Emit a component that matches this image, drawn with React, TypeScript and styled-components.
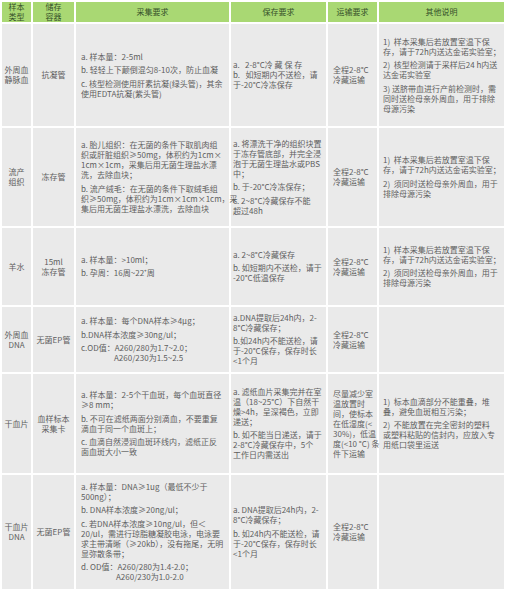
import * as React from "react"
import styled, { createGlobalStyle } from "styled-components"

const GlobalStyle = createGlobalStyle`
  html, body {
    margin: 0;
    padding: 0;
    background: #fff;
  }
  body {
    font-family: "Noto Sans CJK SC", "Noto Sans", sans-serif;
  }
`

const Table = styled.table`
  width: 504px;
  table-layout: fixed;
  border-collapse: collapse;
  font-size: 8px;
  line-height: 10px;
  color: #5e5e5e;
`

const HeadCell = styled.th`
  background: #a9d873;
  color: #35502a;
  font-weight: normal;
  text-align: center;
  vertical-align: middle;
  border: 2px solid #fff;
  padding: 0 2px;
  height: 20px;
`

const Row = styled.tr<{ $h: number }>`
  height: ${p => p.$h}px;
`

const Cell = styled.td<{ $center?: boolean; $pad?: number }>`
  background: #eaeaea;
  border: 2px solid #fff;
  vertical-align: middle;
  text-align: ${p => (p.$center ? "center" : "left")};
  padding: 0 ${p => p.$pad ?? 4}px;
`

const Para = styled.div`
  & + & {
    margin-top: 3.5px;
  }
`

const Line = styled.span<{ $indent?: number }>`
  display: block;
  white-space: pre;
  padding-left: ${p => p.$indent ?? 0}px;
`

type Text = (string | [string, number])[][]

function Lines({ text }: { text: Text }) {
  return (
    <>
      {text.map((para, i) => (
        <Para key={i}>
          {para.map((l, j) =>
            typeof l === "string" ? (
              <Line key={j}>{l}</Line>
            ) : (
              <Line key={j} $indent={l[1]}>
                {l[0]}
              </Line>
            ),
          )}
        </Para>
      ))}
    </>
  )
}

const transport: Text = [["全程2-8°C", "冷藏运输"]]
const noteMother: Text = [
  ["1)  样本采集后若放置室温下保", "存，请于72h内送达金诺实验室；"],
  ["2)  须同时送检母亲外周血，用于", "排除母源污染"],
]

type RowData = {
  h: number
  type: string[]
  tube: string[]
  collect: Text
  keep: Text
  ship: Text
  note: Text
}

const rows: RowData[] = [
  {
    h: 104,
    type: ["外周血", "静脉血"],
    tube: ["抗凝管"],
    collect: [
      ["a. 样本量：2-5ml"],
      ["b. 轻轻上下颠倒混匀8-10次，防止血凝"],
      ["c. 核型检测使用肝素抗凝(绿头管)，其余", "使用EDTA抗凝(紫头管)"],
    ],
    keep: [["a.   2-8°C冷 藏 保 存", "b.   如短期内不送检，请", "于-20°C冷冻保存"]],
    ship: transport,
    note: [
      ["1)  样本采集后若放置室温下保", "存，请于72h内送达金诺实验室；"],
      ["2)  核型检测请于采样后24 h内送", "达金诺实验室"],
      ["3) 送脐带血进行产前检测时，需", "同时送检母亲外周血，用于排除", "母源污染"],
    ],
  },
  {
    h: 100,
    type: ["流产", "组织"],
    tube: ["冻存管"],
    collect: [
      [
        "a. 胎儿组织：在无菌的条件下取肌肉组",
        "织或肝脏组织≥50mg，体积约为1cm×",
        "1cm×1cm，采集后用无菌生理盐水漂",
        "洗，去除血块；",
      ],
      [
        "b. 流产绒毛：在无菌的条件下取绒毛组",
        "织≥50mg，体积约为1cm×1cm×1cm，采",
        "集后用无菌生理盐水漂洗，去除血块",
      ],
    ],
    keep: [
      ["a. 将漂洗干净的组织块置", "于冻存管底部，并完全浸", "泡于无菌生理盐水或PBS", "中；"],
      ["b. 于-20°C冷冻保存；"],
      ["c. 2~8°C冷藏保存不能", "超过48h"],
    ],
    ship: transport,
    note: noteMother,
  },
  {
    h: 79,
    type: ["羊水"],
    tube: ["15ml", "冻存管"],
    collect: [["a. 样本量：>10ml；"], ["b. 孕周：16周~22⁺周"]],
    keep: [["a. 2~8°C冷藏保存"], ["b. 如短期内不送检，请于", "-20°C低温保存"]],
    ship: transport,
    note: noteMother,
  },
  {
    h: 67,
    type: ["外周血", "DNA"],
    tube: ["无菌EP管"],
    collect: [
      ["a. 样本量：每个DNA样本≥4μg；"],
      ["b.DNA样本浓度≥30ng/ul；"],
      ["c.OD值：A260/280为1.7~2.0；", ["A260/230为1.5~2.5", 33]],
    ],
    keep: [["a.DNA提取后24h内，2-", "8°C冷藏保存；"], ["b.如24h内不能送检，请", "于-20°C保存，保存时长", "<1个月"]],
    ship: transport,
    note: [],
  },
  {
    h: 101,
    type: ["干血片"],
    tube: ["血样标本", "采集卡"],
    collect: [
      ["a. 样本量：2-5个干血斑，每个血斑直径", "≥8 mm；"],
      ["b. 不可在滤纸两面分别滴血，不要重复", "滴血于同一个血斑上；"],
      ["c. 血滴自然浸润血斑环线内，滤纸正反", "面血斑大小一致"],
    ],
    keep: [
      ["a. 滤纸血片采集完并在室", "温（18~25°C）下自然干", "燥>4h，呈深褐色，立即", "递送；"],
      ["b. 如不能当日递送，请于", "2-8°C冷藏保存中，5个", "工作日内需送出"],
    ],
    ship: [["尽量减少室", "温放置时", "间，使标本", "在低湿度(<", "30%)，低温", "度(<10 °C) 条", "件下运输"]],
    note: [
      ["1)  标本血滴部分不能重叠，堆", "叠，避免血斑相互污染；"],
      ["2)  不能放置在完全密封的塑料", "或塑料粘贴的信封内，应放入专", "用纸口袋里运送"],
    ],
  },
  {
    h: 116,
    type: ["干血片", "DNA"],
    tube: ["无菌EP管"],
    collect: [
      ["a. 样本量：DNA≥1ug（最低不少于", "500ng）；"],
      ["b. DNA样本浓度≥20ng/ul；"],
      [
        "c. 若DNA样本浓度≥10ng/ul，但＜",
        "20/ul，需进行琼脂糖凝胶电泳，电泳要",
        "求主带清晰（≥20kb），没有拖尾，无明",
        "显弥散条带；",
      ],
      ["d. OD值：A260/280为1.4-2.0；", ["A260/230为1.0-2.0", 35]],
    ],
    keep: [["a. DNA提取后24h内，2-", "8°C冷藏保存；"], ["b. 如24h内不能送检，请", "于-20°C保存，保存时长", "<1个月"]],
    ship: transport,
    note: [],
  },
]

export default function App() {
  return (
    <>
      <GlobalStyle />
      <Table>
        <colgroup>
          <col style={{ width: 31 }} />
          <col style={{ width: 43 }} />
          <col style={{ width: 155 }} />
          <col style={{ width: 97 }} />
          <col style={{ width: 51 }} />
          <col style={{ width: 127 }} />
        </colgroup>
        <thead>
          <tr>
            <HeadCell>
              样本
              <br />
              类型
            </HeadCell>
            <HeadCell>
              储存
              <br />
              容器
            </HeadCell>
            <HeadCell>采集要求</HeadCell>
            <HeadCell>保存要求</HeadCell>
            <HeadCell>运输要求</HeadCell>
            <HeadCell>其他说明</HeadCell>
          </tr>
        </thead>
        <tbody>
          {rows.map((r, i) => (
            <Row key={i} $h={r.h}>
              <Cell $center $pad={1}>
                <Lines text={[r.type]} />
              </Cell>
              <Cell $center $pad={1}>
                <Lines text={[r.tube]} />
              </Cell>
              <Cell $pad={5}>
                <Lines text={r.collect} />
              </Cell>
              <Cell $pad={2}>
                <Lines text={r.keep} />
              </Cell>
              <Cell $pad={5}>
                <Lines text={r.ship} />
              </Cell>
              <Cell $pad={4}>
                <Lines text={r.note} />
              </Cell>
            </Row>
          ))}
        </tbody>
      </Table>
    </>
  )
}
